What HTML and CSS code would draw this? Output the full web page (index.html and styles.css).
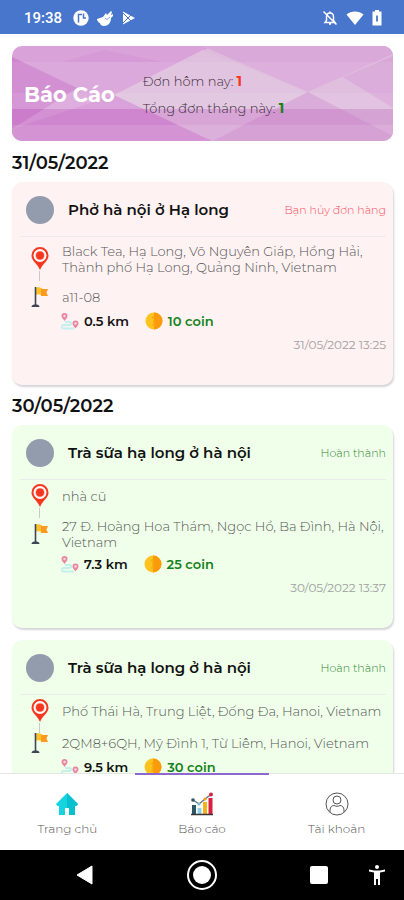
FILE: index.html
```html
<!DOCTYPE html>
<html lang="vi">
<head>
<meta charset="utf-8">
<meta name="viewport" content="width=device-width, initial-scale=1">
<title>Báo Cáo</title>
<link rel="stylesheet" href="styles.css">
</head>
<body>
<svg class="sprite" aria-hidden="true">
  <symbol id="pin" viewBox="0 0 18 24">
    <path d="M9 0a8.500 8.500 0 0 0-8.500 8.500C.5 14 6 16 9 23c3-7 8.500-9 8.500-14.500A8.500 8.500 0 0 0 9 0z" fill="#f5371f"/>
    <circle cx="9" cy="8.500" r="6.500" fill="#fff"/>
    <circle cx="9" cy="8.500" r="4.800" fill="#ffc1b8"/>
    <circle cx="9" cy="8.500" r="4" fill="#f5371f"/>
  </symbol>
  <symbol id="flag" viewBox="0 0 18 22">
    <path d="M5 1.500c3-1.500 4 .5 6 .5v7c-2.500 0-4-1.500-6 0z" fill="#ffc22e"/>
    <path d="M10 3h7l-1.500 3.500L17 10h-7z" fill="#fb9a1e"/>
    <path d="M4.500 1v18" stroke="#3d4654" stroke-width="1.600"/>
    <path d="M.5 21c0-2 2-2.500 4-2.500s4 .5 4 2.500z" fill="#3d4654"/>
  </symbol>
  <symbol id="route" viewBox="0 0 18 18">
    <path d="M4 10h4c3 0 3 3 0 3H3c-3 0-3 3.500 0 3.500h10" fill="none" stroke="#c3efec" stroke-width="1.800"/>
    <path d="M3.500 1a3 3 0 0 0-3 3c0 2 2 3 3 5 1-2 3-3 3-5a3 3 0 0 0-3-3zM14.500 8.500a3 3 0 0 0-3 3c0 2 2 3 3 5 1-2 3-3 3-5a3 3 0 0 0-3-3z" fill="#e8859f"/>
    <circle cx="3.500" cy="4" r="1.200" fill="#fbd9e1"/><circle cx="14.500" cy="11.500" r="1.200" fill="#fbd9e1"/>
  </symbol>
  <symbol id="coin" viewBox="0 0 18 18">
    <circle cx="9" cy="9" r="8.500" fill="#ffc31f"/>
    <path d="M9 .5a8.500 8.500 0 0 1 0 17z" fill="#fb9b0b"/>
    <path d="M7 6l2-1.500V13M7 13h4" fill="none" stroke="#f4a80f" stroke-width="1.200"/>
  </symbol>
</svg>

<header class="status">
  <time class="clock">19:38</time>
  <svg width="16" height="16" viewBox="0 0 16 16"><circle cx="8" cy="8" r="7.700" fill="#fff"/><path d="M5.500 12.500V4.500h3.500M10.500 3.500v4.500h2.500" fill="none" stroke="#4876cd" stroke-width="1.500"/></svg>
  <svg width="17" height="17" viewBox="0 0 17 17"><path d="M0 9c2-1 4-1 6-2l3-4 1 2 4-4 1 1-1 3 2-1v2l-2 2c0 5-3 8-7 8-2 0-4-1-4-3-1 0-2-1-2-2-1 0-1-1-1-2z" fill="#fff"/><path d="M8 8l2 1.500L13 7" fill="none" stroke="#88a5df" stroke-width="1"/></svg>
  <svg width="14" height="14" viewBox="0 0 14 14"><path d="M1 .5L13 7 1 13.500z" fill="#fff"/><path d="M1 2l8 8M1 12l8-8" stroke="#4876cd" stroke-width="1"/></svg>
  <svg class="push" width="16" height="16" viewBox="0 0 16 16"><path d="M3 12.500h10l-1.500-2V7C11.500 4.500 10 3 8 3S4.500 4.500 4.500 7v3.500zM7 14h2M8 1.500V3" fill="none" stroke="#fff" stroke-width="1.500"/><path d="M1.500 1.500l13 13" stroke="#fff" stroke-width="1.500"/></svg>
  <svg width="18" height="14" viewBox="0 0 18 14"><path d="M9 14L.5 3.500C5-.5 13-.5 17.500 3.500z" fill="#fff"/></svg>
  <svg width="10" height="16" viewBox="0 0 10 16"><path d="M3 0h4v1.500h2.500v14H.5v-14H3z" fill="#fff"/><path d="M5 5.500v6" fill="none" stroke="#4876cd" stroke-width="1.800"/></svg>
</header>

<main class="content">
  <section class="banner">
    <svg class="banner-art" viewBox="0 0 380 95" preserveAspectRatio="none" aria-hidden="true">
      <rect width="380" height="95" fill="#d9a2d9"/>
      <path d="M0 11L65 42 0 83z" fill="#cf86cf"/>
      <path d="M0 83L102 49 200 95H0z" fill="#d493d4"/>
      <path d="M102 49L200 0H380V95H200z" fill="#debadc"/>
      <path d="M190 0L295 46 380 8V0z" fill="#d9a9d9"/>
      <path d="M102 49L190 4 295 46 200 95z" fill="#dfbfdd"/>
      <path d="M330 31L380 10V62z" fill="#d8a6d8"/>
      <path d="M50 16L92 4 150 16z" fill="#d394d3" opacity=".5"/>
      <path d="M0 16H380V31H0zM0 31H380V47H0z" fill="#fff" opacity=".08"/>
      <path d="M0 47H380V63H0z" fill="#fff" opacity=".14"/>
      <path d="M0 63H380V95H0z" fill="#c25fc3" opacity=".26"/>
      <path d="M295 46L200 95H380V90z" fill="#c878c8" opacity=".3"/>
      <path d="M0 79H380V95H0z" fill="#fff" opacity=".12"/>
    </svg>
    <h1>Báo Cáo</h1>
    <div class="totals">
      <p>Đơn hôm nay: <strong class="red">1</strong></p>
      <p>Tổng đơn tháng này: <strong class="green">1</strong></p>
    </div>
  </section>

  <h2>31/05/2022</h2>
  <article class="card cancelled">
    <header class="card-head"><span class="avatar"></span><h3>Phở hà nội ở Hạ long</h3><span class="state">Bạn hủy đơn hàng</span></header>
    <div class="stops">
      <div class="stop from"><svg class="pin"><use href="#pin"/></svg><p>Black Tea, Hạ Long, Võ Nguyên Giáp, Hồng Hải,<br>Thành phố Hạ Long, Quảng Ninh, Vietnam</p></div>
      <div class="stop"><svg class="flag"><use href="#flag"/></svg><p>a11-08</p></div>
    </div>
    <div class="facts"><svg><use href="#route"/></svg><b class="km">0.5 km</b><svg><use href="#coin"/></svg><b class="green">10 coin</b></div>
    <time class="stamp">31/05/2022 13:25</time>
  </article>

  <h2>30/05/2022</h2>
  <article class="card done">
    <header class="card-head"><span class="avatar"></span><h3>Trà sữa hạ long ở hà nội</h3><span class="state">Hoàn thành</span></header>
    <div class="stops">
      <div class="stop from"><svg class="pin"><use href="#pin"/></svg><p>nhà cũ</p></div>
      <div class="stop"><svg class="flag"><use href="#flag"/></svg><p>27 Đ. Hoàng Hoa Thám, Ngọc Hồ, Ba Đình, Hà Nội,<br>Vietnam</p></div>
    </div>
    <div class="facts"><svg><use href="#route"/></svg><b class="km">7.3 km</b><svg><use href="#coin"/></svg><b class="green">25 coin</b></div>
    <time class="stamp">30/05/2022 13:37</time>
  </article>

  <article class="card done">
    <header class="card-head"><span class="avatar"></span><h3>Trà sữa hạ long ở hà nội</h3><span class="state">Hoàn thành</span></header>
    <div class="stops">
      <div class="stop from"><svg class="pin"><use href="#pin"/></svg><p>Phố Thái Hà, Trung Liệt, Đống Đa, Hanoi, Vietnam</p></div>
      <div class="stop"><svg class="flag"><use href="#flag"/></svg><p>2QM8+6QH, Mỹ Đình 1, Từ Liêm, Hanoi, Vietnam</p></div>
    </div>
    <div class="facts"><svg><use href="#route"/></svg><b class="km">9.5 km</b><svg><use href="#coin"/></svg><b class="green">30 coin</b></div>
  </article>
</main>

<nav class="tabs">
  <a href="#home">
    <svg width="24" height="24" viewBox="0 0 24 24"><path d="M12 1L1 12l1.500 2H4v9h6v-7h4v7h6v-9h1.500L23 12z" fill="#16d3e0"/><path d="M12 1l11 11-1.500 2H20v9h-6v-7h-2z" fill="#08bfd0"/></svg>
    <span>Trang chủ</span>
  </a>
  <a href="#report" class="active" aria-current="page">
    <svg width="24" height="24" viewBox="0 0 24 24"><path d="M2 13h4v9H2z" fill="#2d5566"/><path d="M7.500 16h4v6h-4z" fill="#8fd0ea"/><path d="M13 10h4v12h-4z" fill="#f6b21b"/><path d="M18.500 6h4v16h-4z" fill="#d9203f"/><path d="M1 22.500h22" stroke="#3b3034" stroke-width="1.500"/><path d="M3 8l6 4 6-5 6-4.500" fill="none" stroke="#63707a" stroke-width="1.300"/><circle cx="3" cy="8" r="1.800" fill="#2d5566"/><circle cx="9" cy="12" r="1.600" fill="#76bdd8"/><circle cx="15" cy="7" r="1.600" fill="#f6a21b"/><circle cx="21" cy="2.500" r="2" fill="#d9203f"/></svg>
    <span>Báo cáo</span>
  </a>
  <a href="#account">
    <svg width="24" height="24" viewBox="0 0 24 24" fill="none" stroke="#555" stroke-width="1"><circle cx="12" cy="12" r="11"/><circle cx="12" cy="8" r="4"/><path d="M5 20v-2c0-3 2-4.500 4-4.500 2 1 4 1 6 0 2 0 4 1.500 4 4.500v2"/></svg>
    <span>Tài khoản</span>
  </a>
</nav>

<footer class="system">
  <button aria-label="Back"><svg width="18" height="20" viewBox="0 0 18 20"><path d="M1 10L16 1v18z" fill="#fff" stroke="#fff" stroke-linejoin="round"/></svg></button>
  <button aria-label="Home"><svg width="32" height="32" viewBox="0 0 32 32"><circle cx="16" cy="16" r="14" fill="none" stroke="#fff" stroke-width="2"/><circle cx="16" cy="16" r="9" fill="#fff"/></svg></button>
  <button aria-label="Recent"><svg width="18" height="18" viewBox="0 0 18 18"><rect width="18" height="18" rx="2" fill="#fff"/></svg></button>
  <button aria-label="Accessibility"><svg width="18" height="20" viewBox="0 0 18 20"><circle cx="9" cy="2" r="2" fill="#fff"/><path d="M1 4.500l5 1h6l5-1v2l-5 1V20h-2v-6H8v6H6V7.500l-5-1z" fill="#fff"/></svg></button>
</footer>
</body>
</html>
```
FILE: styles.css
```css
* { box-sizing: border-box; }
body {
  margin: 0;
  height: 100vh;
  display: flex;
  flex-direction: column;
  overflow: hidden;
  background: #fff;
  color: #111;
  font-family: Montserrat, Inter, "Noto Sans", sans-serif;
  font-size: 12px;
  line-height: 16px;
}
h1, h2, h3, p { margin: 0; }
svg { flex: none; display: block; }
.sprite { position: absolute; width: 0; height: 0; }
.red { color: #f5371f; }
.green { color: #148218; }

.status {
  flex: none;
  height: 34px;
  padding: 2px 22px 0 24px;
  display: flex;
  align-items: center;
  gap: 8px;
  background: #4876cd;
  color: #fff;
}
.clock { font: 500 15px/20px Roboto, sans-serif; margin-right: 3px; }
.push { margin-left: auto; }

.content {
  flex: 1;
  min-height: 0;
  overflow: hidden;
  padding: 12px 11px 0 12px;
}
.banner {
  position: relative;
  height: 95px;
  display: flex;
  align-items: center;
  gap: 28px;
  padding: 2px 0 0 12px;
  border-radius: 10px;
  overflow: hidden;
}
.banner-art { position: absolute; inset: 0; width: 100%; height: 100%; }
.banner h1 { position: relative; color: #fff; font-size: 21px; line-height: 28px; }
.totals { position: relative; display: grid; gap: 7px; color: #3c2c3c; font-size: 13px; line-height: 20px; font-weight: 300; }
.totals strong { font-size: 14px; font-weight: 700; }

h2 { font-size: 18px; line-height: 22px; font-weight: 600; padding: 11px 0 8px; }
.card + h2 { padding-top: 10px; }
.card {
  min-height: 203px;
  border-radius: 10px;
  box-shadow: 1px 2px 2px #d4d4da;
}
.card + .card { margin-top: 12px; }
.cancelled { background: #fff2f2; }
.done { background: #efffea; }
.card-head {
  height: 55px;
  margin: 0 7px 0 8px;
  padding: 2px 0 0 6px;
  display: flex;
  align-items: center;
  border-bottom: 1px solid #ebebeb;
}
.avatar { width: 28px; height: 28px; border-radius: 50%; background: #929cac; margin-right: 14px; }
h3 { font-size: 15px; line-height: 20px; font-weight: 600; }
.state { margin-left: auto; font-size: 11px; font-weight: 300; }
.cancelled .state { color: #fa4a60; }
.done .state { color: #2f842f; }

.stops { display: grid; gap: 12px; padding: 6px 8px 0 19px; }
.stop {
  position: relative;
  min-height: 20px;
  display: grid;
  grid-template-columns: 31px 1fr;
  align-items: center;
  color: #555;
  font-size: 13px;
  font-weight: 300;
}
.stop p { white-space: nowrap; }
.pin { width: 18px; height: 24px; margin: -2px 0; }
.flag { width: 18px; height: 22px; margin: -1px 0; }
.from::after {
  content: "";
  position: absolute;
  left: 8px;
  top: calc(50% + 12px);
  height: 10px;
  border-left: 1px solid #c9c9c9;
}
.facts { height: 20px; margin-top: 4px; padding-left: 49px; display: flex; align-items: center; font-size: 13px; }
.facts svg { width: 18px; height: 18px; margin-right: 5px; }
.facts b { font-weight: 600; }
.km { margin-right: 16px; }
.stamp { display: block; margin: 6px 7px 0; text-align: right; color: #a0a0a0; }

.tabs {
  flex: none;
  height: 77px;
  display: grid;
  grid-template-columns: repeat(3, 1fr);
  border-top: 1px solid #e6e6e6;
  background: #fff;
}
.tabs a {
  display: flex;
  flex-direction: column;
  align-items: center;
  gap: 5px;
  padding-top: 17px;
  color: #555;
  font-weight: 300;
  text-decoration: none;
  border-top: 2px solid transparent;
  margin-top: -1px;
}
.tabs .active { border-color: #8c68cf; }

/* The last, zero-width column centres the accessibility key on the right padding edge. */
.system {
  flex: none;
  height: 50px;
  display: grid;
  grid-template-columns: repeat(3, 1fr) 0;
  align-items: center;
  justify-items: center;
  padding: 0 27px;
  background: #000;
}
.system button { padding: 0; border: 0; background: none; }
```
